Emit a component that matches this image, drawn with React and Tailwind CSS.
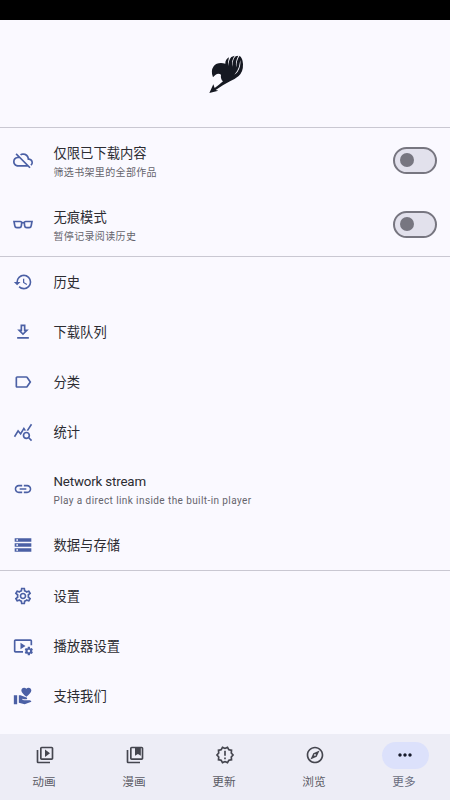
import {
  MdOutlineCloudOff, MdHistory, MdQueryStats, MdLink, MdStorage, MdOutlineSettings,
  MdOutlineVideoSettings, MdVolunteerActivism, MdOutlineVideoLibrary,
  MdOutlineNewReleases, MdOutlineExplore, MdMoreHoriz,
} from "react-icons/md";

function Glasses({ className }) {
  return (
    <svg viewBox="0 0 24 24" className={className} fill="none" stroke="currentColor" strokeWidth="2">
      <path d="M10 10.4 H14" />
      <path d="M1.2 9 H8.7 Q10.6 9 10.4 11 L10 14.2 Q9.7 16.4 7.6 16.4 H4.6 Q2.5 16.4 2.2 14.2 Z M22.8 9 H15.3 Q13.4 9 13.6 11 L14 14.2 Q14.3 16.4 16.4 16.4 H19.4 Q21.5 16.4 21.8 14.2 Z" />
    </svg>
  );
}

function Download({ className }) {
  return (
    <svg viewBox="0 0 24 24" className={className} fill="currentColor">
      <path d="M19 9h-4V3H9v6H5l7 7 7-7zm-8 2V5h2v6h1.17L12 13.17 9.83 11H11zm-6 7h14v2H5z" />
    </svg>
  );
}

function Label({ className }) {
  return (
    <svg viewBox="0 0 24 24" className={className} fill="currentColor">
      <path d="M17.63 5.84C17.27 5.33 16.67 5 16 5L5 5.01C3.9 5.01 3 5.9 3 7v10c0 1.1.9 1.99 2 1.99L16 19c.67 0 1.27-.33 1.63-.84L22 12l-4.37-6.16zM16 17H5V7h11l3.55 5L16 17z" />
    </svg>
  );
}

function Manga({ className }) {
  return (
    <svg viewBox="0 0 24 24" className={className} fill="currentColor">
      <path d="M4 6H2v14c0 1.1.9 2 2 2h14v-2H4V6z" />
      <path fillRule="evenodd" d="M20 2H8c-1.1 0-2 .9-2 2v12c0 1.1.9 2 2 2h12c1.1 0 2-.9 2-2V4c0-1.1-.9-2-2-2zm0 14H8V4h4v9l3.5-2.2L19 13V4h1z" />
    </svg>
  );
}

function Logo() {
  return (
    <svg viewBox="0 0 210 195" className="h-[65px] w-[70px]" fill="#161922">
      <path d="M58 159 L70 133 L74 144 Q87 135 99 124 Q91 117 93 104 Q85 99 77 104 Q72 107 69 112 Q61 93 71 79 Q82 65 106 71 Q105 59 117 52 Q112 66 116 78 Q115 60 124 51 L134 47 Q123 62 127 80 Q127 58 137 49 L145 47 Q135 65 139 82 Q139 60 149 47 Q158 54 159 72 Q160 95 146 108 Q134 118 120 124 Q100 134 77 150 L85 152 Z" />
      <path d="M151 60 Q153 80 143 95 Q138 101 133 104 Q143 93 147 80 Z" fill="#faf9ff" />
    </svg>
  );
}

function Switch() {
  return (
    <span className="flex h-[27px] w-11 items-center rounded-full border-2 border-[#777680] bg-[#e2e1ec] pl-[5px]">
      <span className="size-[13.5px] rounded-full bg-[#777680]" />
    </span>
  );
}

function Row({ icon: Icon, title, sub, toggle, latin, height = "h-[50px]" }) {
  return (
    <div className={`flex shrink-0 items-center px-[13px] ${height}`}>
      <Icon className="size-5 shrink-0 text-[#4b60a5]" />
      <div className={`ml-[20.5px] flex-1 ${toggle ? "pt-[5px]" : "pt-0.5"}`}>
        <div className={`leading-5 text-[#2c2c32] ${latin ? "pt-px text-[13.3px] tracking-[-0.15px]" : "text-[13.3px]"}`}>{title}</div>
        {sub && <div className={`text-[10px] leading-[17px] text-[#65646c] ${latin ? "tracking-[0.41px]" : "tracking-[0.34px]"}`}>{sub}</div>}
      </div>
      {toggle && <Switch />}
    </div>
  );
}

function Tab({ icon: Icon, label, active }) {
  return (
    <div className="flex w-[90px] flex-col items-center pt-2">
      <span className={`flex h-[27px] w-[47px] items-center justify-center rounded-full ${active ? "bg-[#dce1fb] text-[#171b2c]" : "text-[#45464f]"}`}>
        <Icon className="size-5" />
      </span>
      <span className={`mt-[3px] pr-0.5 text-[11.7px] leading-5 ${active ? "text-[#6a6d80]" : "text-[#5b5b65]"}`}>{label}</span>
    </div>
  );
}

export default function App() {
  return (
    <div className="flex h-[800px] w-[450px] flex-col overflow-hidden bg-[#faf9ff] font-[Roboto,'Noto_Sans_CJK_SC',sans-serif]">
      <div className="h-5 shrink-0 bg-black" />
      <div className="flex h-[108px] shrink-0 justify-center border-b border-[#c9c8d2] pt-5">
        <Logo />
      </div>
      <div className="h-[129px] shrink-0 border-b border-[#c9c8d2]">
        <Row icon={MdOutlineCloudOff} title="仅限已下载内容" sub="筛选书架里的全部作品" toggle height="h-16" />
        <Row icon={Glasses} title="无痕模式" sub="暂停记录阅读历史" toggle height="h-16" />
      </div>
      <div className="h-[314px] shrink-0 border-b border-[#c9c8d2]">
        <Row icon={MdHistory} title="历史" />
        <Row icon={Download} title="下载队列" />
        <Row icon={Label} title="分类" />
        <Row icon={MdQueryStats} title="统计" />
        <Row icon={MdLink} title="Network stream" sub="Play a direct link inside the built-in player" latin height="h-[63px]" />
        <Row icon={MdStorage} title="数据与存储" />
      </div>
      <div className="h-[162.5px] shrink-0">
        <Row icon={MdOutlineSettings} title="设置" />
        <Row icon={MdOutlineVideoSettings} title="播放器设置" />
        <Row icon={MdVolunteerActivism} title="支持我们" />
      </div>
      <nav className="flex flex-1 bg-[#ededf6]">
        <Tab icon={MdOutlineVideoLibrary} label="动画" />
        <Tab icon={Manga} label="漫画" />
        <Tab icon={MdOutlineNewReleases} label="更新" />
        <Tab icon={MdOutlineExplore} label="浏览" />
        <Tab icon={MdMoreHoriz} label="更多" active />
      </nav>
    </div>
  );
}
